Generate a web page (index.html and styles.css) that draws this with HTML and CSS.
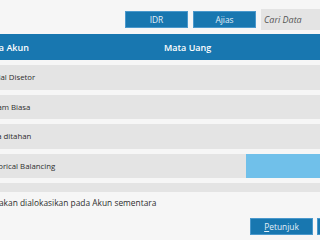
FILE: index.html
```html
<!DOCTYPE html>
<html lang="id">
<head>
    <meta charset="UTF-8">
    <title>Saldo Awal Akun</title>
    <link rel="stylesheet" href="styles.css">
</head>
<body>
    <div class="toolbar">
        <button class="btn">IDR</button>
        <button class="btn">Ajias</button>
        <div class="search">Cari Data</div>
    </div>
    <div class="grid">
        <div class="grid-head">
            <div class="col-name">Nama Akun</div>
            <div class="col-cur">Mata Uang</div>
            <div class="col-amt"></div>
        </div>
        <div class="grid-body">
            <div class="row">
                <div class="col-name">Modal Disetor</div>
                <div class="col-cur"></div>
                <div class="col-amt"></div>
            </div>
            <div class="row">
                <div class="col-name">Saham Biasa</div>
                <div class="col-cur"></div>
                <div class="col-amt"></div>
            </div>
            <div class="row">
                <div class="col-name">Laba ditahan</div>
                <div class="col-cur"></div>
                <div class="col-amt"></div>
            </div>
            <div class="row">
                <div class="col-name">Historical Balancing</div>
                <div class="col-cur"></div>
                <div class="col-amt selected"></div>
            </div>
            <div class="row">
                <div class="col-name"></div>
                <div class="col-cur"></div>
                <div class="col-amt"></div>
            </div>
        </div>
    </div>
    <p class="note">Selisih akan dialokasikan pada Akun sementara</p>
    <div class="footer">
        <button class="btn"><u>P</u>etunjuk</button>
        <button class="btn">Simpan</button>
    </div>
</body>
</html>
```

FILE: styles.css
```css
* {
    margin: 0;
    padding: 0;
    box-sizing: border-box;
    font-family: "Open Sans", sans-serif;
    font-size: 8.4px;
}

body {
    width: 320px;
    height: 240px;
    overflow: hidden;
    background-color: #f6f6f6;
    color: #333333;
}

.toolbar {
    display: flex;
    align-items: center;
    gap: 5px;
    padding: 9px 0 0 125px;
}

.btn {
    flex-shrink: 0;
    width: 63px;
    height: 17px;
    background-color: #1877b0;
    border: 1px solid #4a98cc;
    color: #e3eff8;
    font-size: 8.4px;
}

.search {
    flex-shrink: 0;
    width: 90px;
    height: 21px;
    padding: 4px 3px;
    background-color: #e4e4e4;
    color: #555555;
    font-style: italic;
    font-size: 9px;
}

.grid {
    margin: 4px 0 0 -26px;
    width: 420px;
}

.grid-head, .row {
    display: flex;
    align-items: center;
}

.grid-head {
    height: 26px;
    background-color: #1877b0;
    color: #ffffff;
}

.grid-head div {
    font-weight: 600;
    font-size: 9px;
    padding-left: 4px;
}

.grid-body {
    height: 132px;
    overflow: hidden;
    padding-top: 5px;
    display: flex;
    flex-direction: column;
    gap: 5px;
}

.row {
    flex-shrink: 0;
    height: 24.5px;
    background-color: #e4e4e4;
}

.row div {
    height: 100%;
    display: flex;
    align-items: center;
    font-size: 7.8px;
    color: #2e2e2e;
}

.col-name {
    width: 186px;
    padding-left: 10px;
}

.col-cur {
    width: 86px;
}

.col-amt {
    flex: 1;
}

.row .selected {
    background-color: #70c0ea;
}

.note {
    margin: 5px 0 0 -28px;
    line-height: 12px;
    color: #2e2e2e;
}

.footer {
    display: flex;
    gap: 4px;
    margin: 9px 0 0 250px;
}
```
